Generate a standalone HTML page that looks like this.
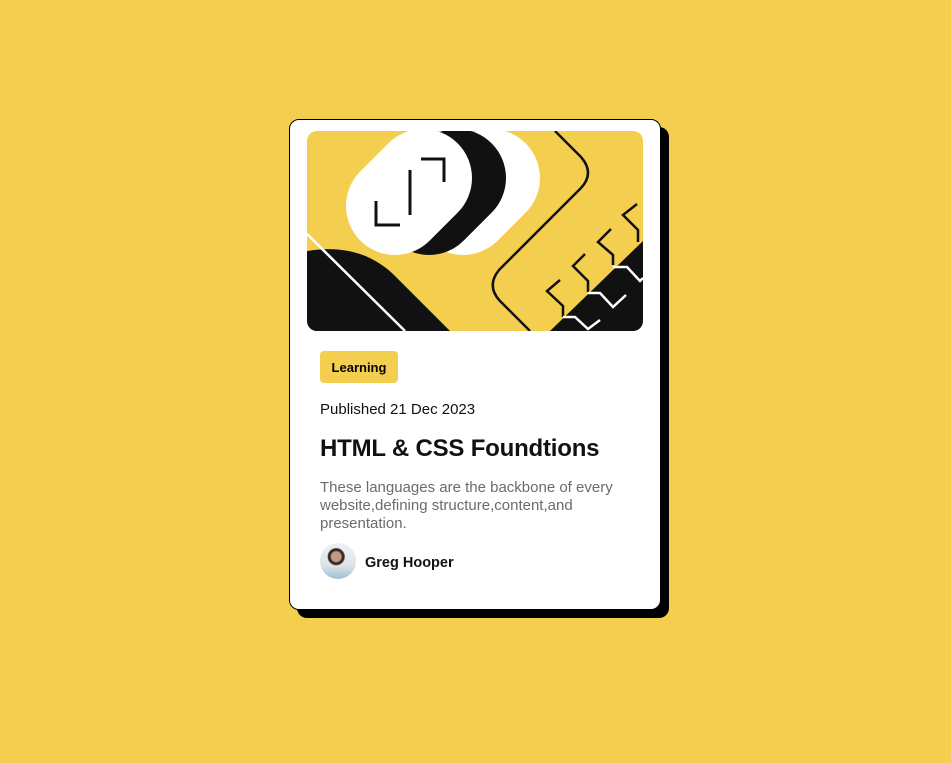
<!DOCTYPE html>
<html><head><meta charset="utf-8"><style>
*{margin:0;padding:0;box-sizing:border-box}
body{width:951px;height:763px;background:#f4ce4e;font-family:"Liberation Sans",sans-serif;position:relative;overflow:hidden}
.card{position:absolute;left:289px;top:119px;width:372px;height:491px;background:#fff;border:1px solid #000;border-radius:10px;box-shadow:8px 8px 0 #000}
.img{position:absolute;left:17px;top:11px;width:336px;height:200px;border-radius:10px;overflow:hidden}
.badge{position:absolute;left:30px;top:231px;width:78px;height:32px;background:#f4ce4e;border-radius:4px;font-weight:bold;font-size:13px;line-height:34px;text-align:center;color:#000}
.pub{position:absolute;left:30px;top:281px;font-size:15px;color:#111}
h1{position:absolute;left:30px;top:315px;font-size:24px;font-weight:bold;color:#111;letter-spacing:-0.2px}
.desc{position:absolute;left:30px;top:359px;width:320px;font-size:15px;line-height:18px;color:#6b6b6b}
.av{position:absolute;left:30px;top:423px;width:36px;height:36px;border-radius:50%;background:radial-gradient(circle at 45% 38%,#c09a80 0 5px,#3a2c26 6px 8px,transparent 9px),linear-gradient(#eef0f2,#dfe5ea 60%,#9fc0d2);}
.name{position:absolute;left:75px;top:435px;font-size:14.5px;font-weight:bold;color:#111}
</style></head><body>
<div class="card">
<div class="img">
<svg width="336" height="200" viewBox="0 0 336 200">
<rect width="336" height="200" fill="#f4ce4e"/>
<line x1="156" y1="75" x2="184" y2="47" stroke="#fff" stroke-width="98" stroke-linecap="round"/>
<line x1="122" y1="75" x2="150" y2="47" stroke="#111" stroke-width="98" stroke-linecap="round"/>
<line x1="88" y1="75" x2="116" y2="47" stroke="#fff" stroke-width="98" stroke-linecap="round"/>
<polyline points="69,70 69,94 93,94" fill="none" stroke="#111" stroke-width="3"/>
<line x1="103" y1="39" x2="103" y2="84" stroke="#111" stroke-width="3"/>
<polyline points="114,28 137,28 137,51" fill="none" stroke="#111" stroke-width="3"/>
<path d="M0,120 C35,114 65,122 88,145 L143,200 L0,200 Z" fill="#111"/>
<line x1="0" y1="103" x2="98" y2="200" stroke="#fff" stroke-width="2.5"/>
<path d="M248,0 L274,26 Q288,42 274,57 L192,139 Q179,155 193,170 L223,200" fill="none" stroke="#111" stroke-width="2.5"/>
<path d="M336,110 L243,200 L336,200 Z" fill="#111"/>
<g fill="none" stroke="#111" stroke-width="2.5">
<polyline points="330,73 316,84 331,99 331,111"/>
<polyline points="304,98 291,111 306,124 306,134"/>
<polyline points="278,123 266,135 281,150 281,161"/>
<polyline points="253,149 240,160 256,175 256,186"/>
</g>
<g fill="none" stroke="#fff" stroke-width="2.5">
<polyline points="306,136 320,136 333,150 336,147"/>
<polyline points="281,162 293,162 306,176 319,164"/>
<polyline points="256,186 268,186 281,198 293,189"/>
</g>
</svg>
</div>
<div class="badge">Learning</div>
<div class="pub">Published 21 Dec 2023</div>
<h1>HTML &amp; CSS Foundtions</h1>
<div class="desc">These languages are the backbone of every website,defining structure,content,and presentation.</div>
<div class="av"></div>
<div class="name">Greg Hooper</div>
</div>
</body></html>
